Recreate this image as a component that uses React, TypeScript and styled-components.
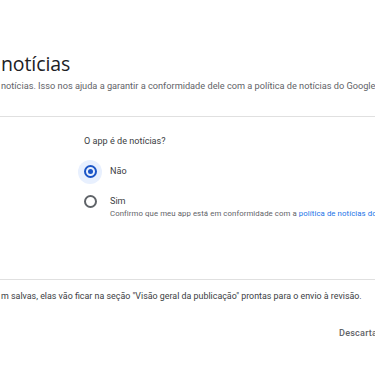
import React, { useState } from 'react';
import styled, { createGlobalStyle } from 'styled-components';

const GlobalStyle = createGlobalStyle`
  html, body {
    margin: 0;
    padding: 0;
    background: #ffffff;
    overflow: hidden;
  }
  body {
    font-family: Roboto, "Liberation Sans", Arial, sans-serif;
    color: #202124;
  }
`;

const Page = styled.div`
  width: 375px;
  height: 366px;
  overflow: hidden;
  background: #ffffff;
`;

const Header = styled.header`
  padding: 50px 0 0 1px;
  white-space: nowrap;
`;

const Title = styled.h1`
  margin: 0;
  font-family: "Open Sans", Roboto, sans-serif;
  font-size: 19.5px;
  font-weight: 400;
  line-height: 28px;
  color: #202124;
  letter-spacing: -0.1px;
`;

const Subtitle = styled.p`
  margin: 1px 0 0;
  font-size: 9.2px;
  line-height: 14px;
  color: #5f6368;
`;

const Divider = styled.hr<{ $top: number }>`
  border: 0;
  border-top: 1px solid #e0e0e0;
  margin: ${({ $top }) => $top}px 0 0;
`;

const Form = styled.div`
  padding: 17px 0 0 84px;
  white-space: nowrap;
`;

const Question = styled.div`
  font-size: 9.1px;
  line-height: 14px;
  color: #3c4043;
`;

const Options = styled.div`
  display: flex;
  flex-direction: column;
  gap: 6px;
  margin-top: 11.5px;
  margin-left: -6px;
`;

const Option = styled.label`
  display: flex;
  align-items: flex-start;
  gap: 8px;
  cursor: pointer;
`;

const RadioHalo = styled.span<{ $checked: boolean }>`
  flex: none;
  width: 24px;
  height: 24px;
  border-radius: 50%;
  display: flex;
  align-items: center;
  justify-content: center;
  background: ${({ $checked }) => ($checked ? '#e8f0fe' : 'transparent')};
`;

const RadioRing = styled.span<{ $checked: boolean }>`
  box-sizing: border-box;
  width: 13px;
  height: 13px;
  border-radius: 50%;
  border: 2px solid ${({ $checked }) => ($checked ? '#1b55c6' : '#5f6368')};
  display: flex;
  align-items: center;
  justify-content: center;

  &::after {
    content: '';
    width: 5px;
    height: 5px;
    border-radius: 50%;
    background: ${({ $checked }) => ($checked ? '#1b55c6' : 'transparent')};
  }
`;

const OptionText = styled.span`
  display: flex;
  flex-direction: column;
  padding-top: 5px;
`;

const OptionLabel = styled.span`
  font-size: 9.1px;
  line-height: 13px;
  color: #3c4043;
`;

const OptionHint = styled.span`
  font-size: 7.8px;
  line-height: 11px;
  color: #5f6368;
  letter-spacing: 0.08px;
`;

const Link = styled.a`
  color: #1a73e8;
  text-decoration: none;
`;

const Note = styled.p`
  margin: 9px 0 0 1px;
  font-size: 8.9px;
  line-height: 14px;
  color: #3c4043;
  white-space: nowrap;
`;

const Actions = styled.div`
  display: flex;
  gap: 12px;
  margin-top: 23px;
  padding-left: 339px;
  white-space: nowrap;
`;

const TextButton = styled.button`
  border: 0;
  background: none;
  padding: 0;
  font-family: Roboto, "Liberation Sans", sans-serif;
  font-size: 9.1px;
  font-weight: 500;
  line-height: 14px;
  color: #5f6368;
  letter-spacing: 0.2px;
`;

const options = [
  { id: 'no', label: 'Não' },
  { id: 'yes', label: 'Sim', hint: true },
];

export default function App() {
  const [value, setValue] = useState('no');

  return (
    <>
      <GlobalStyle />
      <Page>
        <Header>
          <Title>notícias</Title>
          <Subtitle>
            notícias. Isso nos ajuda a garantir a conformidade dele com a política de notícias do Google Play.
          </Subtitle>
        </Header>
        <Divider $top={23} />
        <Form>
          <Question>O app é de notícias?</Question>
          <Options>
            {options.map((o) => (
              <Option key={o.id} onClick={() => setValue(o.id)}>
                <RadioHalo $checked={value === o.id}>
                  <RadioRing $checked={value === o.id} />
                </RadioHalo>
                <OptionText>
                  <OptionLabel>{o.label}</OptionLabel>
                  {o.hint && (
                    <OptionHint>
                      Confirmo que meu app está em conformidade com a{' '}
                      <Link href="#">política de notícias do Google Play</Link>
                    </OptionHint>
                  )}
                </OptionText>
              </Option>
            ))}
          </Options>
        </Form>
        <Divider $top={60} />
        <Note>
          m salvas, elas vão ficar na seção "Visão geral da publicação" prontas para o envio à revisão.
        </Note>
        <Actions>
          <TextButton>Descartar alterações</TextButton>
        </Actions>
      </Page>
    </>
  );
}
